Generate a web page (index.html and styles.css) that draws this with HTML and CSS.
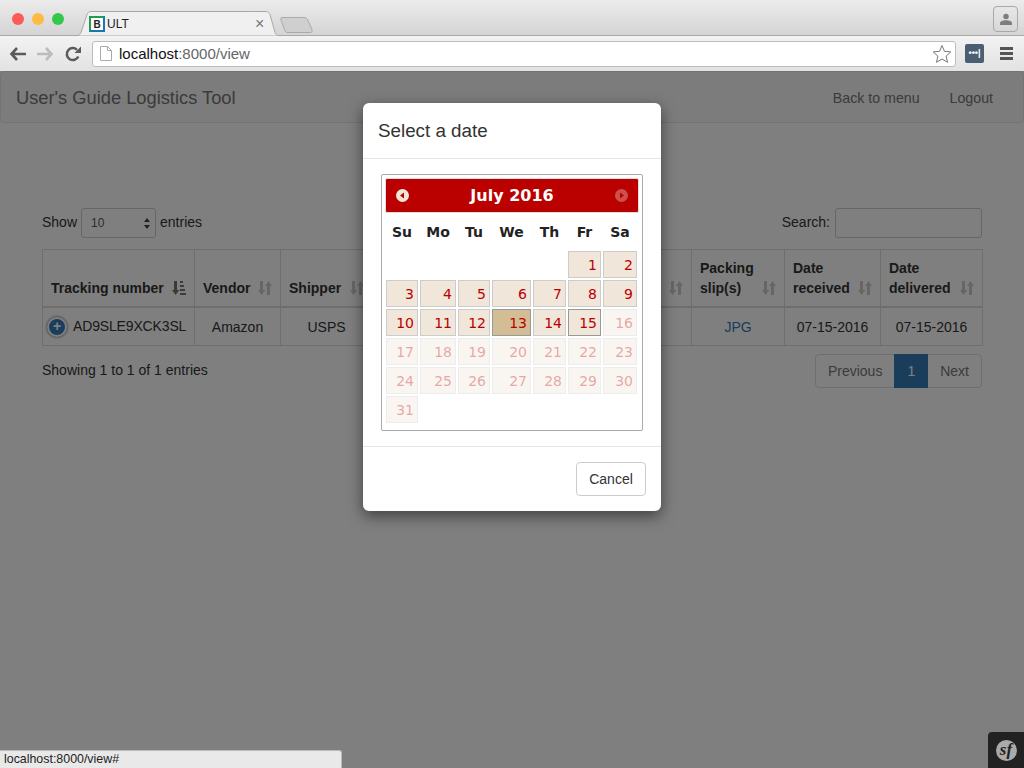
FILE: index.html

```html
<!DOCTYPE html>
<html lang="en">
<head>
  <meta charset="UTF-8" />
  <title>ULT</title>
  <link rel="stylesheet" href="styles.css">
</head>
<body>
  <svg class="defs" width="0" height="0">
    <symbol id="sort" viewBox="0 0 14 16">
      <path d="M2 1h3v9h2.500L3.500 15 0 10h2z" fill="#ccc"/>
      <path d="M9 15h3V6h2L10.500 1 7 6h2z" fill="#ccc"/>
    </symbol>
  </svg>

  <div class="browser">
    <div class="tabstrip">
      <div class="lights">
        <span class="light red"></span>
        <span class="light yellow"></span>
        <span class="light green"></span>
      </div>
      <div class="tab">
        <svg class="tab-shape" width="205" height="25" viewBox="0 0 205 25">
          <path d="M0 24.500h2c2 0 3-1 4-3L12 3.500c.8-2 2-3 4-3h175c2 0 3 1 4 3l5 18c.6 2 2 3 4 3" fill="#f0f0f0" stroke="#a9a9a9"/>
        </svg>
        <span class="favicon">B</span>
        <span class="tab-title">ULT</span>
        <span class="tab-close">×</span>
      </div>
      <svg class="newtab" width="34" height="18" viewBox="0 0 34 18">
        <path d="M2 1.500h22c2 0 3 1 4 3l4 9c.6 2 0 3-2 3H8c-2 0-3-1-3.500-3L1 4c-.5-1.500 0-2.500 1-2.500z" fill="#cfcfcf" stroke="#aaa"/>
      </svg>
      <div class="profile">
        <svg width="12" height="12" viewBox="0 0 14 14">
          <circle cx="7" cy="4" r="3.200" fill="#7d7d7d"/>
          <path d="M0 14v-2c0-2 3-3.500 7-3.500s7 1.500 7 3.500v2z" fill="#7d7d7d"/>
        </svg>
      </div>
    </div>
    <div class="toolbar">
      <svg class="nav-icon" width="17" height="16" viewBox="0 0 17 16">
        <path d="M8 2 2.500 8 8 14M3 8h14" fill="none" stroke="#5a5a5a" stroke-width="2.600"/>
      </svg>
      <svg class="nav-icon" width="17" height="16" viewBox="0 0 17 16">
        <path d="M9 2l5.500 6L9 14M14 8H0" fill="none" stroke="#bdbdbd" stroke-width="2.600"/>
      </svg>
      <svg class="nav-icon" width="16" height="16" viewBox="0 0 16 16">
        <path d="M13.300 10.500A6 6 0 1 1 12 3.800" fill="none" stroke="#5a5a5a" stroke-width="2.500"/>
        <path d="M9.500 7H16V.5z" fill="#5a5a5a"/>
      </svg>
      <div class="urlbar">
        <svg width="12" height="15" viewBox="0 0 12 15">
          <path d="M.5.500h7l4 4v10H.500z" fill="#fff" stroke="#aaa"/>
          <path d="M7.500.500v4h4" fill="none" stroke="#aaa"/>
        </svg>
        <span class="url"><b>localhost</b>:8000/view</span>
        <svg class="star" width="20" height="19" viewBox="0 0 20 19">
          <path d="M10 1.500l2.500 5.800 6.300.6-4.700 4.200 1.400 6.200L10 15l-5.500 3.300 1.400-6.200L1.200 7.900l6.300-.6z" fill="#fff" stroke="#777"/>
        </svg>
      </div>
      <span class="lastpass">•••|</span>
      <span class="menu"><i></i><i></i><i></i></span>
    </div>
  </div>

  <div class="page">
    <nav class="navbar">
      <a class="brand">User's Guide Logistics Tool</a>
      <div class="nav-links">
        <a>Back to menu</a>
        <a>Logout</a>
      </div>
    </nav>

    <div class="content">
      <div class="table-top">
        <label class="length">Show
          <span class="fake-select">10
            <svg width="6" height="11" viewBox="0 0 6 11"><path d="M3 0l3 4H0zM3 11l3-4H0z" fill="#444"/></svg>
          </span> entries</label>
        <label class="search">Search: <span class="fake-input"></span></label>
      </div>

      <table class="data">
        <colgroup>
          <col class="c1"><col class="c2"><col class="c3"><col class="c4"><col class="c5"><col class="c6"><col class="c7"><col class="c8">
        </colgroup>
        <thead>
          <tr>
            <th><div class="th-in"><span>Tracking number</span>
              <svg class="sort" width="14" height="16" viewBox="0 0 14 16">
                <path d="M2 1h3v9h2.500L3.500 15 0 10h2z" fill="#777"/>
                <path d="M8 1h3v2H8zM8 5h4v2H8zM8 9h5v2H8zM8 13h6v2H8z" fill="#777"/>
              </svg></div></th>
            <th><div class="th-in"><span>Vendor</span><svg class="sort" width="14" height="16"><use href="#sort"/></svg></div></th>
            <th><div class="th-in"><span>Shipper</span><svg class="sort" width="14" height="16"><use href="#sort"/></svg></div></th>
            <th></th>
            <th><div class="th-in th-end"><svg class="sort" width="14" height="16"><use href="#sort"/></svg></div></th>
            <th><div class="th-in"><span>Packing<br>slip(s)</span><svg class="sort" width="14" height="16"><use href="#sort"/></svg></div></th>
            <th><div class="th-in"><span>Date<br>received</span><svg class="sort" width="14" height="16"><use href="#sort"/></svg></div></th>
            <th><div class="th-in"><span>Date<br>delivered</span><svg class="sort" width="14" height="16"><use href="#sort"/></svg></div></th>
          </tr>
        </thead>
        <tbody>
          <tr>
            <td class="first"><span class="expand">+</span>AD9SLE9XCK3SL</td>
            <td>Amazon</td>
            <td>USPS</td>
            <td></td>
            <td></td>
            <td><a class="link">JPG</a></td>
            <td>07-15-2016</td>
            <td>07-15-2016</td>
          </tr>
        </tbody>
      </table>

      <div class="table-bottom">
        <span>Showing 1 to 1 of 1 entries</span>
        <div class="pager">
          <a>Previous</a>
          <a class="current">1</a>
          <a>Next</a>
        </div>
      </div>
    </div>

    <div class="backdrop"></div>

    <div class="modal">
      <div class="modal-header">Select a date</div>
      <div class="modal-body">
        <div class="datepicker">
          <div class="dp-header">
            <svg width="13" height="13" viewBox="0 0 13 13">
              <circle cx="6.500" cy="6.500" r="6.500" fill="#f0e6d9"/>
              <path d="M8 3.500v6L4 6.500z" fill="#b00"/>
            </svg>
            <span>July 2016</span>
            <svg class="dim" width="13" height="13" viewBox="0 0 13 13">
              <circle cx="6.500" cy="6.500" r="6.500" fill="#f0e6d9"/>
              <path d="M5 3.500v6l4-3z" fill="#b00"/>
            </svg>
          </div>
          <div class="dp-names">
            <span>Su</span><span>Mo</span><span>Tu</span><span>We</span><span>Th</span><span>Fr</span><span>Sa</span>
          </div>
          <div class="dp-days">
            <i></i><i></i><i></i><i></i><i></i>
            <a>1</a><a>2</a>
            <a>3</a><a>4</a><a>5</a><a>6</a><a>7</a><a>8</a><a>9</a>
            <a>10</a><a>11</a><a>12</a><a class="active">13</a><a>14</a><a class="today">15</a><a class="off">16</a>
            <a class="off">17</a><a class="off">18</a><a class="off">19</a><a class="off">20</a><a class="off">21</a><a class="off">22</a><a class="off">23</a>
            <a class="off">24</a><a class="off">25</a><a class="off">26</a><a class="off">27</a><a class="off">28</a><a class="off">29</a><a class="off">30</a>
            <a class="off">31</a>
          </div>
        </div>
      </div>
      <div class="modal-footer">
        <button class="btn">Cancel</button>
      </div>
    </div>

    <div class="status">localhost:8000/view#</div>
    <div class="sf-toolbar"><span class="sf-logo">sf</span></div>
  </div>
</body>
</html>
```

FILE: styles.css

```css
* {
  box-sizing: border-box;
}
html, body {
  margin: 0;
  height: 100%;
  overflow: hidden;
}
body {
  font-family: "Liberation Sans", Arial, sans-serif;
  font-size: 14px;
  color: #333;
  background: #fff;
}
.defs {
  position: absolute;
}

/* browser window */
.browser {
  height: 71px;
}
.tabstrip {
  height: 36px;
  display: flex;
  align-items: flex-start;
  background: linear-gradient(#ececec, #d4d4d4);
  border-bottom: 1px solid #a9a9a9;
}
.lights {
  display: flex;
  gap: 8px;
  padding: 13px 0 0 12px;
  width: 75px;
}
.light {
  width: 12px;
  height: 12px;
  border-radius: 50%;
}
.red { background: #fc5b57; }
.yellow { background: #fdbc40; }
.green { background: #34c84a; }
.tab {
  position: relative;
  width: 205px;
  height: 36px;
  display: flex;
  align-items: center;
  padding: 11px 0 0 14px;
}
.tab-shape {
  position: absolute;
  left: 0;
  top: 11px;
}
.favicon {
  position: relative;
  width: 16px;
  height: 16px;
  border: 2px solid #1f9d55;
  border-right-color: #1b75bb;
  border-bottom-color: #1b75bb;
  background: #fff;
  font-size: 10px;
  font-weight: bold;
  line-height: 13px;
  text-align: center;
  color: #222;
}
.tab-title {
  position: relative;
  margin-left: 2px;
  font-size: 12px;
  color: #222;
}
.tab-close {
  position: absolute;
  left: 180px;
  top: 14px;
  font-size: 16px;
  line-height: 20px;
  color: #777;
}
.newtab {
  margin: 16px 0 0 0;
}
.profile {
  margin: 6px 6px 0 auto;
  width: 25px;
  height: 26px;
  border: 1px solid #a9a9a9;
  border-radius: 4px;
  display: flex;
  align-items: center;
  justify-content: center;
}
.toolbar {
  height: 35px;
  display: flex;
  align-items: center;
  padding: 0 11px 0 9px;
  background: linear-gradient(#f3f3f3, #e2e2e2);
}
.nav-icon {
  margin-right: 11px;
}
.urlbar {
  width: 864px;
  height: 26px;
  display: flex;
  align-items: center;
  gap: 7px;
  padding: 0 3px 0 7px;
  background: #fff;
  border: 1px solid #bdbdbd;
  border-radius: 3px;
}
.url {
  font-size: 15px;
  color: #666;
}
.url b {
  font-weight: normal;
  color: #111;
}
.star {
  margin-left: auto;
}
.lastpass {
  width: 19px;
  height: 19px;
  margin-left: 9px;
  background: #4b5f72;
  border-radius: 2px;
  color: #fff;
  font-size: 9px;
  font-weight: bold;
  line-height: 19px;
  text-align: center;
}
.menu {
  margin-left: auto;
  width: 13px;
  display: flex;
  flex-direction: column;
  gap: 2px;
}
.menu i {
  height: 3px;
  background: #555;
}

/* page */
.page {
  position: relative;
  height: 697px;
}
.navbar {
  height: 52px;
  display: flex;
  justify-content: space-between;
  align-items: center;
  padding: 2px 30px 0 15px;
  background: #f8f8f8;
  border: 1px solid #e7e7e7;
  border-radius: 4px;
  color: #777;
}
.brand {
  font-size: 18.300px;
}
.nav-links {
  display: flex;
  gap: 30px;
  font-size: 14.200px;
}
.content {
  padding: 85px 42px 0;
}
.table-top {
  display: flex;
  justify-content: space-between;
  height: 30px;
  margin-bottom: 11px;
}
.length, .search {
  display: flex;
  align-items: flex-start;
  gap: 4px;
  line-height: 28px;
}
.search {
  gap: 5px;
}
.fake-select {
  width: 75px;
  height: 30px;
  display: flex;
  align-items: center;
  justify-content: space-between;
  padding: 0 5px 0 9px;
  border: 1px solid #ccc;
  border-radius: 3px;
  font-size: 12px;
  color: #555;
}
.fake-input {
  width: 147px;
  height: 30px;
  border: 1px solid #ccc;
  border-radius: 3px;
}
.data {
  width: 940px;
  table-layout: fixed;
  border-collapse: collapse;
  border: 1px solid #ddd;
}
.c1 { width: 152px; }
.c2 { width: 86px; }
.c3 { width: 92px; }
.c4 { width: 183px; }
.c5 { width: 136px; }
.c6 { width: 93px; }
.c7 { width: 96px; }
.c8 { width: 102px; }
.data th {
  height: 57px;
  padding: 8px;
  text-align: left;
  vertical-align: bottom;
  line-height: 20px;
  border: 1px solid #ddd;
  border-bottom: 2px solid #ddd;
}
.th-in {
  display: flex;
  justify-content: space-between;
  align-items: flex-end;
}
.th-end {
  justify-content: flex-end;
}
.sort {
  margin-bottom: 2px;
  flex: none;
}
.data td {
  height: 38px;
  padding: 2px 0 0;
  text-align: center;
  border: 1px solid #ddd;
}
.data td.first {
  text-align: left;
  padding-left: 4px;
  white-space: nowrap;
  letter-spacing: -0.15px;
}
.expand {
  display: inline-block;
  width: 16px;
  height: 16px;
  margin-right: 6px;
  border: 2px solid #fff;
  box-sizing: content-box;
  box-shadow: 0 0 3px #444;
  border-radius: 50%;
  background: #337ab7;
  color: #fff;
  font-size: 14px;
  font-weight: bold;
  line-height: 15px;
  text-align: center;
  vertical-align: middle;
}
.link {
  color: #337ab7;
}
.table-bottom {
  display: flex;
  justify-content: space-between;
  align-items: flex-start;
  margin-top: 8px;
}
.table-bottom > span {
  padding-top: 8px;
}
.pager {
  display: flex;
  height: 34px;
  line-height: 32px;
  border: 1px solid #ddd;
  border-radius: 4px;
  color: #777;
}
.pager a {
  padding: 0 12px;
}
.pager .current {
  margin: -1px 0;
  padding: 1px 13px;
  background: #337ab7;
  color: #fff;
}
.backdrop {
  position: absolute;
  inset: 0;
  background: rgba(0, 0, 0, 0.5);
}

/* modal */
.modal {
  position: absolute;
  left: 363px;
  top: 32px;
  width: 298px;
  height: 408px;
  background: #fff;
  border-radius: 6px;
  box-shadow: 0 5px 15px rgba(0, 0, 0, 0.5);
}
.modal-header {
  height: 56px;
  padding: 0 15px;
  font-size: 18.800px;
  line-height: 55px;
  border-bottom: 1px solid #e5e5e5;
}
.modal-body {
  height: 287px;
  padding: 15px 18px;
}
.datepicker {
  width: 262px;
  height: 257px;
  padding: 3px;
  border: 1px solid #aaa;
  border-radius: 2px;
  font-family: "DejaVu Sans", Verdana, sans-serif;
}
.dp-header {
  height: 35px;
  display: flex;
  justify-content: space-between;
  align-items: center;
  padding: 0 10px;
  background: #b00;
  border: 1px solid #ddd;
  border-radius: 2px;
  color: #fff;
  font-size: 16px;
  font-weight: bold;
}
.dim {
  opacity: 0.35;
}
.dp-names, .dp-days {
  display: grid;
  grid-template-columns: 32px 36px 32px 39px 33px 33px 34px;
  column-gap: 2px;
  margin-left: 1px;
}
.dp-names {
  height: 38px;
  align-items: center;
  text-align: center;
  font-size: 14px;
  font-weight: bold;
  color: #222;
}
.dp-days {
  grid-auto-rows: 27px;
  row-gap: 2px;
  font-size: 14px;
  color: #b00;
}
.dp-days a {
  padding-right: 3px;
  text-align: right;
  line-height: 27px;
  background: #f0e6d9;
  border: 1px solid #ccc;
}
.dp-days .active {
  background: #d2bd96;
  border-color: #999;
}
.dp-days .today {
  border-color: #999;
}
.dp-days .off {
  opacity: 0.35;
}
.modal-footer {
  height: 65px;
  display: flex;
  justify-content: flex-end;
  padding: 15px;
  border-top: 1px solid #e5e5e5;
}
.btn {
  width: 70px;
  height: 34px;
  background: #fff;
  border: 1px solid #ccc;
  border-radius: 4px;
  font-family: inherit;
  font-size: 14px;
  color: #333;
}

/* bottom overlays */
.status {
  position: absolute;
  left: 0;
  bottom: 0;
  width: 342px;
  height: 18px;
  padding: 1px 4px;
  background: #e9e9e9;
  border: 1px solid #bbb;
  border-left: 0;
  border-bottom: 0;
  border-radius: 0 3px 0 0;
  font-size: 12.400px;
  line-height: 15px;
  color: #222;
}
.sf-toolbar {
  position: absolute;
  right: 0;
  bottom: 0;
  width: 36px;
  height: 36px;
  display: flex;
  align-items: center;
  justify-content: center;
  background: #222;
  border-radius: 4px 0 0 0;
}
.sf-logo {
  width: 21px;
  height: 21px;
  border-radius: 50%;
  background: #aaa;
  color: #222;
  font-family: "Liberation Serif", serif;
  font-style: italic;
  font-weight: bold;
  font-size: 17px;
  line-height: 20px;
  text-align: center;
}
```
